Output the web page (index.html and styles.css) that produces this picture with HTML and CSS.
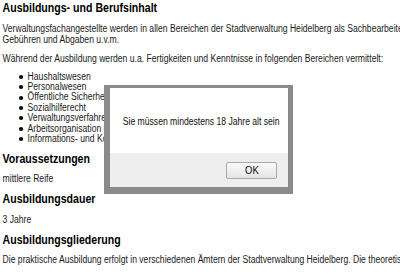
FILE: index.html
```html
<!DOCTYPE html>
<html lang="de">
<head>
<meta charset="utf-8">
<title>Ausbildung</title>
<link rel="stylesheet" href="styles.css">
</head>
<body>
<div class="page">
  <h2>Ausbildungs- und Berufsinhalt</h2>
  <p>Verwaltungsfachangestellte werden in allen Bereichen der Stadtverwaltung Heidelberg als Sachbearbeiter in den Bereichen Steuern,<br>Gebühren und Abgaben u.v.m.</p>
  <p>Während der Ausbildung werden u.a. Fertigkeiten und Kenntnisse in folgenden Bereichen vermittelt:</p>
  <ul class="list">
    <li>Haushaltswesen</li>
    <li>Personalwesen</li>
    <li>Öffentliche Sicherheit und Ordnung</li>
    <li>Sozialhilferecht</li>
    <li>Verwaltungsverfahrensrecht</li>
    <li>Arbeitsorganisation und Bürokommunikation</li>
    <li>Informations- und Kommunikationstechnik</li>
  </ul>
  <h2>Voraussetzungen</h2>
  <p>mittlere Reife</p>
  <h2>Ausbildungsdauer</h2>
  <p>3 Jahre</p>
  <h2>Ausbildungsgliederung</h2>
  <p>Die praktische Ausbildung erfolgt in verschiedenen Ämtern der Stadtverwaltung Heidelberg. Die theoretische Ausbildung findet an der Berufsschule statt.</p>
</div>
<div class="dialog">
  <div class="dialog-message"><span class="narrow">Sie müssen mindestens 18 Jahre alt sein</span></div>
  <div class="dialog-footer">
    <button class="dialog-button"><span class="narrow">OK</span></button>
  </div>
</div>
</body>
</html>
```
FILE: styles.css
```css
html, body {
  margin: 0;
  padding: 0;
  background: #fff;
  overflow: hidden;
}
body {
  width: 400px;
  height: 280px;
  position: relative;
  font-family: "Liberation Sans", Arial, sans-serif;
  color: #1a1a1a;
}
.page {
  width: 760px;
  padding: 1px 0 0 3px;
  transform: scaleX(0.86);
  transform-origin: 0 0;
}
h2 {
  margin: 0 0 7.5px;
  font-size: 12.3px;
  line-height: 14px;
  font-weight: bold;
  color: #000;
}
p {
  margin: 0 0 8px;
  font-size: 10px;
  line-height: 11px;
}
.list {
  list-style: none;
  margin: 0 0 7.5px;
  padding: 0;
}
.list li {
  display: flex;
  align-items: center;
  gap: 5.5px;
  font-size: 10px;
  line-height: 10.4px;
  padding-left: 19px;
}
.list li::before {
  content: "";
  width: 4.6px;
  height: 4px;
  border-radius: 50%;
  background: #111;
  flex: none;
}
.dialog {
  position: absolute;
  left: 104px;
  top: 85px;
  width: 178px;
  border-style: solid;
  border-color: #8b8b8b;
  border-width: 3px 5px 7px 6px;
  background: #fff;
}
.narrow {
  display: inline-block;
  transform: scaleX(0.86);
}
.dialog-message {
  height: 37px;
  padding-top: 28px;
  font-size: 10px;
  line-height: 11px;
  text-align: center;
  white-space: nowrap;
  color: #111;
}
.dialog-footer {
  height: 34px;
  background: #eeeeee;
  display: flex;
  justify-content: flex-end;
  align-items: center;
  padding-right: 11px;
}
.dialog-button {
  width: 51px;
  height: 17px;
  padding: 0;
  border: 1px solid #a9a9a9;
  border-radius: 2px;
  background: linear-gradient(#fbfbfb, #e4e4e4);
  font-family: "Liberation Sans", Arial, sans-serif;
  font-size: 11px;
  line-height: 15px;
  color: #111;
}
```
